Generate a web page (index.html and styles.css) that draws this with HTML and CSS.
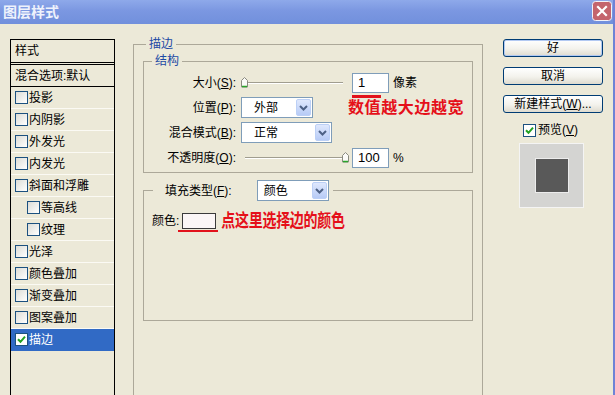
FILE: index.html
```html
<!DOCTYPE html>
<html lang="zh">
<head>
  <meta charset="UTF-8" />
  <title>图层样式</title>
  <link rel="stylesheet" href="styles.css">
</head>
<body>
  <div class="window">
    <div class="titlebar">
      <span class="title">图层样式</span>
      <svg class="close" width="20" height="20" viewBox="0 0 20 20">
        <rect x="0.5" y="0.5" width="19" height="19" rx="3" fill="#c4646d" stroke="#f2f2f8"/>
        <path d="M6 6 L14 14 M14 6 L6 14" stroke="#fff" stroke-width="2.2" stroke-linecap="square"/>
      </svg>
    </div>

    <div class="body">
      <div class="style-list">
        <div class="list-head">样式</div>
        <div class="list-item blend">混合选项:默认</div>
        <div class="list-item"><span class="cb"></span>投影</div>
        <div class="list-item"><span class="cb"></span>内阴影</div>
        <div class="list-item"><span class="cb"></span>外发光</div>
        <div class="list-item"><span class="cb"></span>内发光</div>
        <div class="list-item"><span class="cb"></span>斜面和浮雕</div>
        <div class="list-item sub"><span class="cb"></span>等高线</div>
        <div class="list-item sub"><span class="cb"></span>纹理</div>
        <div class="list-item"><span class="cb"></span>光泽</div>
        <div class="list-item"><span class="cb"></span>颜色叠加</div>
        <div class="list-item"><span class="cb"></span>渐变叠加</div>
        <div class="list-item"><span class="cb"></span>图案叠加</div>
        <div class="list-item selected">
          <span class="cb checked"><svg width="9" height="9" viewBox="0 0 9 9"><path d="M1 4.2 L3.5 6.8 L8 1.6" stroke="#21a121" stroke-width="2" fill="none"/></svg></span>描边
        </div>
      </div>

      <fieldset class="group outer">
        <legend>描边</legend>

        <fieldset class="group inner">
          <legend>结构</legend>

          <div class="row">
            <span class="row-label">大小(<u>S</u>):</span>
            <div class="slider">
              <div class="track"></div>
              <svg class="thumb" style="left:0px" width="7" height="11" viewBox="0 0 7 11"><path d="M0.5 3.5 L3.5 0.5 L6.5 3.5 L6.5 10 L0.5 10 Z" fill="#fbfbf8" stroke="#8a8a80"/><path d="M1 9.5 H6" stroke="#2aa52a" stroke-width="1.5"/></svg>
            </div>
            <div class="num">1<span class="mark"></span></div>
            <span class="unit">像素</span>
          </div>

          <div class="row">
            <span class="row-label">位置(<u>P</u>):</span>
            <div class="combo w72">外部<span class="combo-btn"><svg width="9" height="6" viewBox="0 0 9 6"><path d="M1 1 L4.5 4.5 L8 1" stroke="#4d6185" stroke-width="2" fill="none"/></svg></span></div>
            <span class="note-big">数值越大边越宽</span>
          </div>

          <div class="row">
            <span class="row-label">混合模式(<u>B</u>):</span>
            <div class="combo w91">正常<span class="combo-btn"><svg width="9" height="6" viewBox="0 0 9 6"><path d="M1 1 L4.5 4.5 L8 1" stroke="#4d6185" stroke-width="2" fill="none"/></svg></span></div>
          </div>

          <div class="row">
            <span class="row-label">不透明度(<u>O</u>):</span>
            <div class="slider">
              <div class="track op"></div>
              <svg class="thumb" style="left:101px" width="7" height="11" viewBox="0 0 7 11"><path d="M0.5 3.5 L3.5 0.5 L6.5 3.5 L6.5 10 L0.5 10 Z" fill="#fbfbf8" stroke="#8a8a80"/><path d="M1 9.5 H6" stroke="#2aa52a" stroke-width="1.5"/></svg>
            </div>
            <div class="num">100</div>
            <span class="unit">%</span>
          </div>
        </fieldset>

        <fieldset class="group inner fill">
          <legend>
            <span class="fill-label">填充类型(<u>F</u>):</span>
            <span class="combo w72">颜色<span class="combo-btn"><svg width="9" height="6" viewBox="0 0 9 6"><path d="M1 1 L4.5 4.5 L8 1" stroke="#4d6185" stroke-width="2" fill="none"/></svg></span></span>
          </legend>

          <div class="color-row">
            <span>颜色:</span>
            <div class="swatch"><span class="mark"></span></div>
            <span class="note-small">点这里选择边的颜色</span>
          </div>
        </fieldset>
      </fieldset>

      <div class="actions">
        <div class="btn default">好</div>
        <div class="btn">取消</div>
        <div class="btn">新建样式(<u>W</u>)...</div>
        <div class="preview-check">
          <span class="cb checked"><svg width="9" height="9" viewBox="0 0 9 9"><path d="M1 4.2 L3.5 6.8 L8 1.6" stroke="#21a121" stroke-width="2" fill="none"/></svg></span>
          <span>预览(<u>V</u>)</span>
        </div>
        <div class="preview"><div class="preview-swatch"></div></div>
      </div>
    </div>
  </div>
</body>
</html>
```

FILE: styles.css
```css
* { box-sizing: border-box; }
html, body {
  margin: 0;
  overflow: hidden;
}
body {
  font-family: "Liberation Sans", "Noto Sans CJK SC", sans-serif;
  font-size: 12px;
  line-height: 14px;
  color: #000;
  background-color: #ece9d8;
}

u { text-decoration: underline; text-underline-offset: 1px; }

.window {
  width: 615px;
  height: 395px;
  overflow: hidden;
  background-color: #ece9d8;
  border-right: 2px solid #6f83d6;
}

.titlebar {
  height: 24px;
  display: flex;
  align-items: center;
  justify-content: space-between;
  padding: 0 1px 0 3px;
  background: linear-gradient(#8ea9ea, #7b97e1 45%, #7190dc);
}

.title {
  color: #eef2fc;
  font-weight: bold;
  font-size: 14px;
  line-height: 16px;
  margin-top: -1px;
}

.close { margin-top: -2px; }

.body {
  display: flex;
  align-items: flex-start;
  padding-left: 10px;
}

/* left list */
.style-list {
  width: 105px;
  height: 360px;
  margin-top: 15px;
  border: 1px solid #000;
  border-bottom: none;
}

.list-head {
  height: 25px;
  padding-left: 4px;
  display: flex;
  align-items: center;
  border-bottom: 3px double #000;
}

.list-item {
  height: 22px;
  display: flex;
  align-items: center;
  gap: 1px;
  padding-left: 4px;
  border-bottom: 1px solid #fbfaf4;
}

.list-item.blend { border-bottom-color: #000; }
.list-item.sub { padding-left: 16px; }

.list-item.selected {
  background-color: #316ac5;
  color: #fff;
  border-bottom-color: #316ac5;
}

.cb {
  width: 13px;
  height: 13px;
  flex: none;
  border: 1px solid #1c5180;
  background: linear-gradient(135deg, #dcdcd6, #ffffff);
  display: inline-flex;
  align-items: center;
  justify-content: center;
}

.cb.checked { background: #fff; }

/* group boxes */
.group {
  margin: 0;
  padding: 0;
  min-width: 0;
  border: 1px solid #aca899;
}

.group > legend {
  padding: 0 3px;
  line-height: 14px;
  color: #1c4aa5;
}

.outer {
  width: 350px;
  height: 360px;
  margin: 13px 0 0 18px;
  border-bottom: none;
}

.outer > legend { margin-left: 12px; }

.inner {
  width: 330px;
  margin: 3px 0 0 9px;
  padding: 2px 0 2px 0;
}

.inner > legend { margin-left: 8px; }

.row {
  display: flex;
  align-items: center;
  height: 25px;
}

.row-label {
  width: 92px;
  margin-right: 5px;
  text-align: right;
}

.slider {
  position: relative;
  width: 108px;
  height: 13px;
}

.track {
  position: absolute;
  left: 5px;
  right: 6px;
  top: 6px;
  height: 2px;
  border-top: 1px solid #a09d8f;
  border-bottom: 1px solid #fff;
}

.track.op { left: 4px; }

.thumb {
  position: absolute;
  top: 1px;
}

.num {
  position: relative;
  width: 37px;
  height: 20px;
  margin-left: 3px;
  padding-left: 5px;
  display: flex;
  align-items: center;
  font-size: 13px;
  border: 1px solid #7f9db9;
  background: #fff;
}

.num .mark {
  position: absolute;
  left: -1px;
  top: 21px;
  width: 29px;
  height: 3px;
  background: #e2121b;
}

.unit { margin-left: 4px; }

.combo {
  display: flex;
  align-items: center;
  height: 21px;
  padding-left: 12px;
  border: 1px solid #7f9db9;
  background: #fff;
  color: #000;
}

.combo.w72 { width: 72px; }
.combo.w91 { width: 91px; }

.combo-btn {
  margin-left: auto;
  margin-right: 1px;
  width: 15px;
  height: 17px;
  display: flex;
  align-items: center;
  justify-content: center;
  border: 1px solid #bcd0f6;
  border-radius: 2px;
  background: linear-gradient(#dfe8fd, #b7cbf6);
}

.note-big {
  margin-left: 35px;
  color: #e5101a;
  font-weight: bold;
  font-size: 16px;
  line-height: 20px;
  letter-spacing: 0.6px;
}

.fill {
  margin-top: 7px;
  padding: 10px 0 89px 8px;
}

.fill > legend {
  display: flex;
  align-items: center;
  height: 21px;
  margin-left: 1px;
  padding: 0 4px 0 12px;
  color: #000;
}

.fill-label { margin-right: 25px; }

.fill .combo { padding-left: 6px; }

.color-row {
  display: flex;
  align-items: center;
  height: 20px;
}

.swatch {
  position: relative;
  width: 34px;
  height: 16px;
  margin-left: 3px;
  border: 1px solid #3a3a3a;
  background: #fbf6f6;
}

.swatch .mark {
  position: absolute;
  left: -5px;
  top: 16px;
  width: 40px;
  height: 2px;
  background: #e2121b;
}

.note-small {
  display: inline-block;
  margin-left: 5px;
  color: #e5101a;
  font-weight: bold;
  font-size: 14px;
  letter-spacing: -0.3px;
  transform: scaleY(1.3);
}

/* right column */
.actions {
  width: 100px;
  margin: 15px 0 0 20px;
  display: flex;
  flex-direction: column;
}

.btn {
  height: 18px;
  margin-bottom: 10px;
  display: flex;
  align-items: center;
  justify-content: center;
  border: 1px solid #003c74;
  border-radius: 3px;
  background: linear-gradient(#ffffff, #f3f2ec 55%, #dedbcf);
}

.btn.default { box-shadow: inset 0 0 0 1px #b2c9f2; }

.preview-check {
  display: flex;
  align-items: center;
  gap: 2px;
  margin: 0 0 0 20px;
}

.preview {
  width: 65px;
  height: 65px;
  margin: 6px 0 0 16px;
  display: flex;
  align-items: center;
  justify-content: center;
  background: #d4d4d2;
  border: 1px solid #f4f4f4;
}

.preview-swatch {
  width: 34px;
  height: 35px;
  background: #595959;
  border: 1px solid #ececec;
}
```
